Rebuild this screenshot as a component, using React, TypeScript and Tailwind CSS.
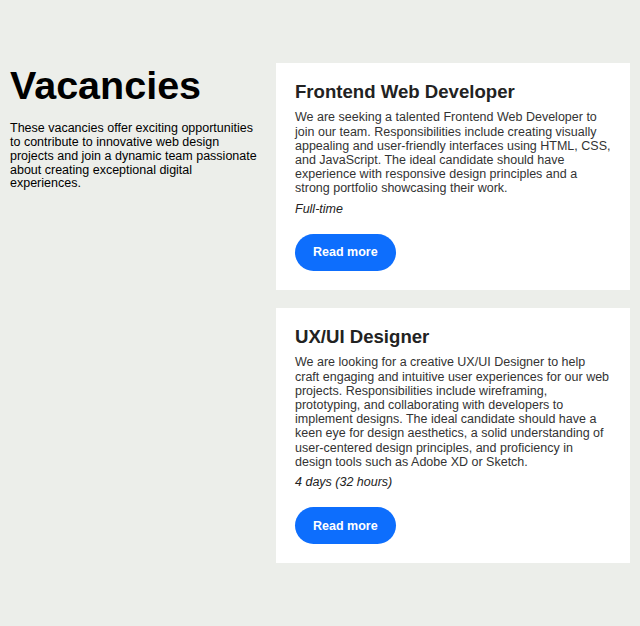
const font = { fontFamily: '"Liberation Sans", Arial, sans-serif' };

type Job = { title: string; text: string; hours: string };

const jobs: Job[] = [
  {
    title: "Frontend Web Developer",
    text: "We are seeking a talented Frontend Web Developer to join our team. Responsibilities include creating visually appealing and user-friendly interfaces using HTML, CSS, and JavaScript. The ideal candidate should have experience with responsive design principles and a strong portfolio showcasing their work.",
    hours: "Full-time",
  },
  {
    title: "UX/UI Designer",
    text: "We are looking for a creative UX/UI Designer to help craft engaging and intuitive user experiences for our web projects. Responsibilities include wireframing, prototyping, and collaborating with developers to implement designs. The ideal candidate should have a keen eye for design aesthetics, a solid understanding of user-centered design principles, and proficiency in design tools such as Adobe XD or Sketch.",
    hours: "4 days (32 hours)",
  },
];

function JobCard({ job }: { job: Job }) {
  return (
    <article className="bg-white pt-[18px] pb-[19px] pl-[19px] pr-[19px]">
      <h2 className="text-[18.6px] font-bold leading-[1.15] text-[#222]">{job.title}</h2>
      <p className="mt-[8px] text-[12.5px] leading-[14.2px] text-[#333]">{job.text}</p>
      <p className="mt-[6px] text-[12.5px] italic leading-[14.4px] text-[#222]">{job.hours}</p>
      <button className="mt-[18px] h-[37px] rounded-full bg-[#0d6efd] px-[18px] text-[12.5px] font-bold text-white">
        Read more
      </button>
    </article>
  );
}

export default function App() {
  return (
    <div style={font} className="min-h-screen bg-[#eceeea] px-[10px] pt-[63px]">
      <div className="flex gap-[16px]">
        <div className="w-[250px] shrink-0">
          <h1 className="text-[39.5px] font-bold leading-[1.15] text-black">Vacancies</h1>
          <p className="mt-[14px] text-[12.5px] leading-[13.75px] text-black">
            These vacancies offer exciting opportunities to contribute to innovative web design projects and join a dynamic team passionate about creating exceptional digital experiences.
          </p>
        </div>
        <div className="flex w-[354px] flex-col gap-[18px]">
          {jobs.map((job) => (
            <JobCard key={job.title} job={job} />
          ))}
        </div>
      </div>
    </div>
  );
}
